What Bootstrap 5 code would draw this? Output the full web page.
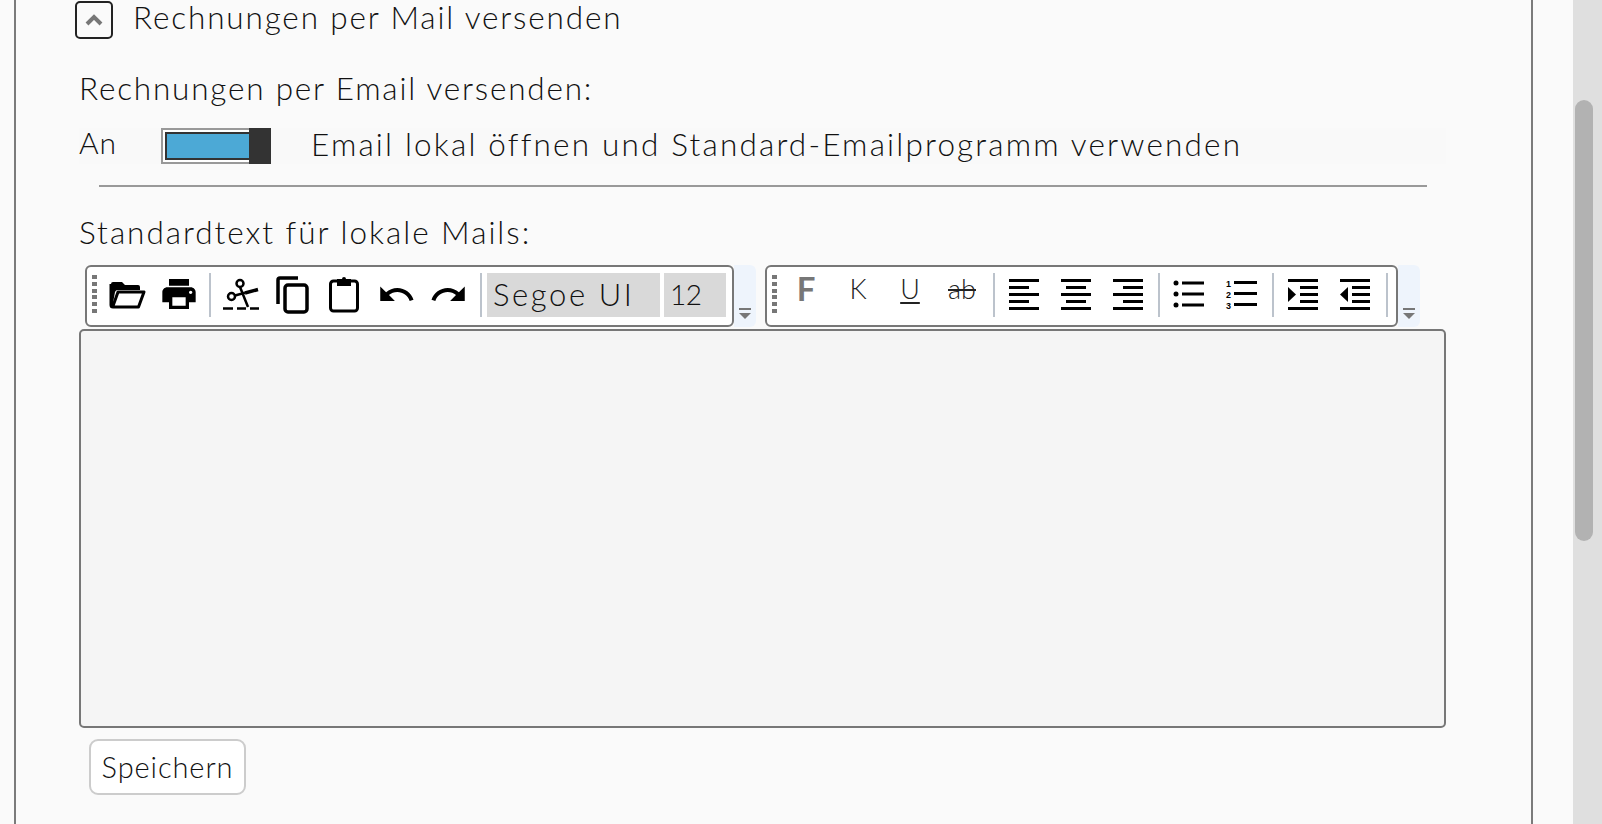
<!DOCTYPE html>
<html lang="de">
<head>
<meta charset="utf-8">
<title>Rechnungen per Mail versenden</title>
<link href="https://cdn.jsdelivr.net/npm/bootstrap@5.3.0/dist/css/bootstrap.min.css" rel="stylesheet">
<style>
html,body{height:824px;overflow:hidden;background:#fafafa}
body{font-family:Lato,"Noto Sans",sans-serif;font-weight:300;color:#111}
.shell{height:824px}
.mainarea{width:1573px;padding:0 40px 0 14px}
.frame{height:824px;border-left:2px solid #7b7b7b;border-right:2px solid #7b7b7b;padding:1px 0 0 63px}
.sbar{width:29px;background:#dfdfdf;padding:100px 9px 0 2px}
.sthumb{height:441px;background:#b2b2b2;border-radius:9px}
.collapse-btn{width:38px;height:38px;border:2px solid #222;border-radius:5px;background:#fafafa;margin-left:-4px;margin-right:20px}
.big{font-size:31.5px;letter-spacing:1.85px;line-height:30px;margin-bottom:6px}
.lbl{margin:0;height:38px;line-height:38px;font-size:31.5px;letter-spacing:1.8px}
.lbl1{margin-top:30px}
.optrow{height:36px;margin-top:21px;background:#f9f9f9;width:1367px}
.antext{width:82px;font-size:30px;letter-spacing:1px;line-height:28px;margin-bottom:8px}
.sw{width:110px;height:36px;border:2px solid #999;background:#fff;padding:2px;position:relative}
.swin{height:28px;border:2px solid #333;background:#4ca9d6}
.swh{position:absolute;right:-2px;top:-2px;width:22px;height:36px;background:#333}
.opttext{margin-left:40px;font-size:31.5px;letter-spacing:2.18px;line-height:32px;margin-bottom:4px}
.rule{width:1328px;height:2px;background:#999;margin:21px 0 0 20px}
.lbl2{margin-top:26px;letter-spacing:1.98px}
.bars{margin-left:6px;margin-top:14px;height:62px}
.tb{height:62px;background:#fff;border:2px solid #777;border-radius:6px;padding:6px 0 6px 5px}
.tb1{width:649px}
.tb2{width:633px}
.ovf{width:22px;height:62px;background:#eef4fc;border-radius:0 6px 6px 0;padding:43px 0 0 5px}
.ovf2{margin-right:9px}
.grip{width:5px;height:38px;margin-top:2px;background:repeating-linear-gradient(#777 0 4px,transparent 4px 6.8px);margin-right:10px}
.ic{width:52px;height:42px}
.ic svg{display:block}
.sep{width:2px;height:44px;background:#bcc3cc;flex:none}
.field{height:44px;background:#d9d9d9;font-size:31px;line-height:42px;letter-spacing:2.6px;padding-left:6px}
.f1{width:173px;margin-left:5px}
.f2{width:62px;margin-left:4px;font-size:28px;letter-spacing:-.5px}
.tx{font-size:27px;line-height:32px;color:#222;width:52px;text-align:center}
.tx.bold{font-weight:700;color:#777;font-size:33px;line-height:30px}
.tx.us{text-decoration:underline;text-decoration-thickness:1.5px;text-underline-offset:3px}
.tx.st{text-decoration:line-through;text-decoration-thickness:1.5px}
.editor{width:1367px;height:399px;margin-top:2px;background:#f5f5f5;border:2px solid #777;border-radius:5px}
.savebtn{margin:11px 0 0 10px;width:157px;height:56px;background:#fff;border:2px solid #ccc;border-radius:9px;font-size:29px;font-weight:300;letter-spacing:.9px;color:#111;padding:0;line-height:50px}
.savebtn:hover{background:#fff;border-color:#ccc;color:#111}
</style>
</head>
<body>
<div class="shell d-flex">
  <div class="mainarea">
    <div class="frame">
      <div class="d-flex align-items-center">
        <button type="button" class="collapse-btn p-0 d-flex align-items-center justify-content-center" aria-label="Einklappen">
          <svg width="18" height="12" viewBox="0 0 18 12"><path d="M2 10 9 3l7 7" fill="none" stroke="#777" stroke-width="4"/></svg>
        </button>
        <span class="big">Rechnungen per Mail versenden</span>
      </div>
      <p class="lbl lbl1">Rechnungen per Email versenden:</p>
      <div class="optrow d-flex align-items-center">
        <div class="antext">An</div>
        <div class="sw"><div class="swin"></div><div class="swh"></div></div>
        <div class="opttext">Email lokal öffnen und Standard-Emailprogramm verwenden</div>
      </div>
      <div class="rule"></div>
      <p class="lbl lbl2">Standardtext für lokale Mails:</p>
      <div class="bars d-flex">
        <div class="tb tb1 d-flex">
          <div class="grip"></div>
          <div class="ic d-flex justify-content-center align-items-center" style="margin-left:-6px">
            <svg width="38" height="38" viewBox="0 0 38 38"><path d="M3 9a2 2 0 0 1 2-2h9l3 3h13a2 2 0 0 1 2 2v3H10a3 3 0 0 0-3 2L5 28H3z" fill="#000"/><path d="M3 9v21a2 2 0 0 0 2 2h25.500L36 17H10L5 31" fill="none" stroke="#000" stroke-width="3" stroke-linejoin="round"/></svg>
          </div>
          <div class="ic d-flex justify-content-center align-items-center">
            <svg width="40" height="40" viewBox="0 0 24 24"><path d="M19 8H5c-1.66 0-3 1.34-3 3v6h4v4h12v-4h4v-6c0-1.66-1.34-3-3-3zm-3 11H8v-5h8v5zm3-7c-.55 0-1-.45-1-1s.45-1 1-1 1 .45 1 1-.45 1-1 1zm-1-9H6v4h12V3z" fill="#000"/></svg>
          </div>
          <div class="sep ms-1"></div>
          <div class="ic d-flex justify-content-center align-items-center" style="width:51px;margin-left:4px">
            <svg width="38" height="38" viewBox="0 0 38 38" fill="none" stroke="#000" stroke-width="2.500"><circle cx="18" cy="8.500" r="3.500"/><circle cx="9.500" cy="21.500" r="3.500"/><path d="M18 12l8 20M13 20.500l10-2.700"/><path d="M23 18l13-3.500" stroke-width="3.500"/><path d="M1 33.500h10M15 33.500h9M28 33.500h9" stroke-width="2.500"/></svg>
          </div>
          <div class="ic d-flex justify-content-center align-items-center">
            <svg width="38" height="40" viewBox="0 0 38 40" fill="none" stroke="#000" stroke-width="3.500"><path d="M5 30V6a2 2 0 0 1 2-2h18"/><rect x="12" y="11" width="22" height="27" rx="3"/></svg>
          </div>
          <div class="ic d-flex justify-content-center align-items-center">
            <svg width="34" height="40" viewBox="0 0 34 40"><rect x="3.500" y="7" width="27" height="30" rx="3" fill="none" stroke="#000" stroke-width="3"/><path d="M10 5h5a2 2 0 0 1 4 0h5v7H10z" fill="#000"/></svg>
          </div>
          <div class="ic d-flex justify-content-center align-items-center">
            <svg width="39" height="39" viewBox="0 0 24 24"><path d="M12.500 8c-2.650 0-5.050.99-6.900 2.600L2 7v9h9l-3.620-3.620c1.390-1.160 3.160-1.880 5.120-1.880 3.540 0 6.550 2.310 7.600 5.500l2.370-.78C21.080 11.030 17.150 8 12.500 8z" fill="#000"/></svg>
          </div>
          <div class="ic d-flex justify-content-center align-items-center">
            <svg width="39" height="39" viewBox="0 0 24 24"><path d="M18.400 10.600C16.550 8.990 14.150 8 11.500 8c-4.650 0-8.580 3.030-9.960 7.220L3.900 16c1.050-3.190 4.050-5.500 7.600-5.500 1.950 0 3.730.72 5.120 1.880L13 16h9V7l-3.600 3.600z" fill="#000"/></svg>
          </div>
          <div class="sep" style="margin-left:6px"></div>
          <div class="field f1">Segoe UI</div>
          <div class="field f2">12</div>
        </div>
        <div class="ovf ovf2"><svg class="d-block" width="12" height="12" viewBox="0 0 12 12"><path d="M0 1h12" stroke="#777" stroke-width="2"/><path d="M0 5h12l-6 6z" fill="#777"/></svg></div>
        <div class="tb tb2 d-flex">
          <div class="grip"></div>
          <div class="tx bold" style="margin-left:-7px">F</div>
          <div class="tx">K</div>
          <div class="tx us">U</div>
          <div class="tx st">ab</div>
          <div class="sep" style="margin-left:5px"></div>
          <div class="ic d-flex justify-content-center align-items-center" style="margin-left:3px">
            <svg width="32" height="34" viewBox="0 0 32 34" fill="#000"><rect x="1" y="2" width="30" height="3"/><rect x="1" y="9" width="20" height="3"/><rect x="1" y="16" width="30" height="3"/><rect x="1" y="23" width="20" height="3"/><rect x="1" y="30" width="30" height="3"/></svg>
          </div>
          <div class="ic d-flex justify-content-center align-items-center">
            <svg width="32" height="34" viewBox="0 0 32 34" fill="#000"><rect x="1" y="2" width="30" height="3"/><rect x="6" y="9" width="20" height="3"/><rect x="1" y="16" width="30" height="3"/><rect x="6" y="23" width="20" height="3"/><rect x="1" y="30" width="30" height="3"/></svg>
          </div>
          <div class="ic d-flex justify-content-center align-items-center">
            <svg width="32" height="34" viewBox="0 0 32 34" fill="#000"><rect x="1" y="2" width="30" height="3"/><rect x="11" y="9" width="20" height="3"/><rect x="1" y="16" width="30" height="3"/><rect x="11" y="23" width="20" height="3"/><rect x="1" y="30" width="30" height="3"/></svg>
          </div>
          <div class="sep" style="margin-left:4px"></div>
          <div class="ic d-flex justify-content-center align-items-center" style="margin-left:3px">
            <svg width="32" height="30" viewBox="0 0 32 30" fill="#000"><circle cx="3" cy="4" r="2.500"/><circle cx="3" cy="15" r="2.500"/><circle cx="3" cy="26" r="2.500"/><rect x="9" y="2.500" width="22" height="3"/><rect x="9" y="13.500" width="22" height="3"/><rect x="9" y="24.500" width="22" height="3"/></svg>
          </div>
          <div class="ic d-flex justify-content-center align-items-center">
            <svg width="32" height="32" viewBox="0 0 32 32" fill="#000"><text x="1" y="9" font-size="9" font-weight="700" font-family="Liberation Sans,sans-serif">1</text><text x="1" y="20" font-size="9" font-weight="700" font-family="Liberation Sans,sans-serif">2</text><text x="1" y="31" font-size="9" font-weight="700" font-family="Liberation Sans,sans-serif">3</text><rect x="9" y="3" width="23" height="3"/><rect x="9" y="14" width="23" height="3"/><rect x="9" y="25" width="23" height="3"/></svg>
          </div>
          <div class="sep" style="margin-left:5px"></div>
          <div class="ic d-flex justify-content-center align-items-center" style="margin-left:3px">
            <svg width="32" height="34" viewBox="0 0 32 34" fill="#000"><rect x="1" y="2" width="30" height="3"/><rect x="13" y="9" width="18" height="3"/><rect x="13" y="16" width="18" height="3"/><rect x="13" y="23" width="18" height="3"/><rect x="1" y="30" width="30" height="3"/><path d="M1 10l8 7.500-8 7.500z"/></svg>
          </div>
          <div class="ic d-flex justify-content-center align-items-center">
            <svg width="32" height="34" viewBox="0 0 32 34" fill="#000"><rect x="1" y="2" width="30" height="3"/><rect x="13" y="9" width="18" height="3"/><rect x="13" y="16" width="18" height="3"/><rect x="13" y="23" width="18" height="3"/><rect x="1" y="30" width="30" height="3"/><path d="M9 10l-8 7.500 8 7.500z"/></svg>
          </div>
          <div class="sep" style="margin-left:5px"></div>
        </div>
        <div class="ovf"><svg class="d-block" width="12" height="12" viewBox="0 0 12 12"><path d="M0 1h12" stroke="#777" stroke-width="2"/><path d="M0 5h12l-6 6z" fill="#777"/></svg></div>
      </div>
      <div class="editor"></div>
      <button type="button" class="btn savebtn d-block">Speichern</button>
    </div>
  </div>
  <div class="sbar"><div class="sthumb"></div></div>
</div>
<script src="https://cdn.jsdelivr.net/npm/bootstrap@5.3.0/dist/js/bootstrap.bundle.min.js"></script>
</body>
</html>
